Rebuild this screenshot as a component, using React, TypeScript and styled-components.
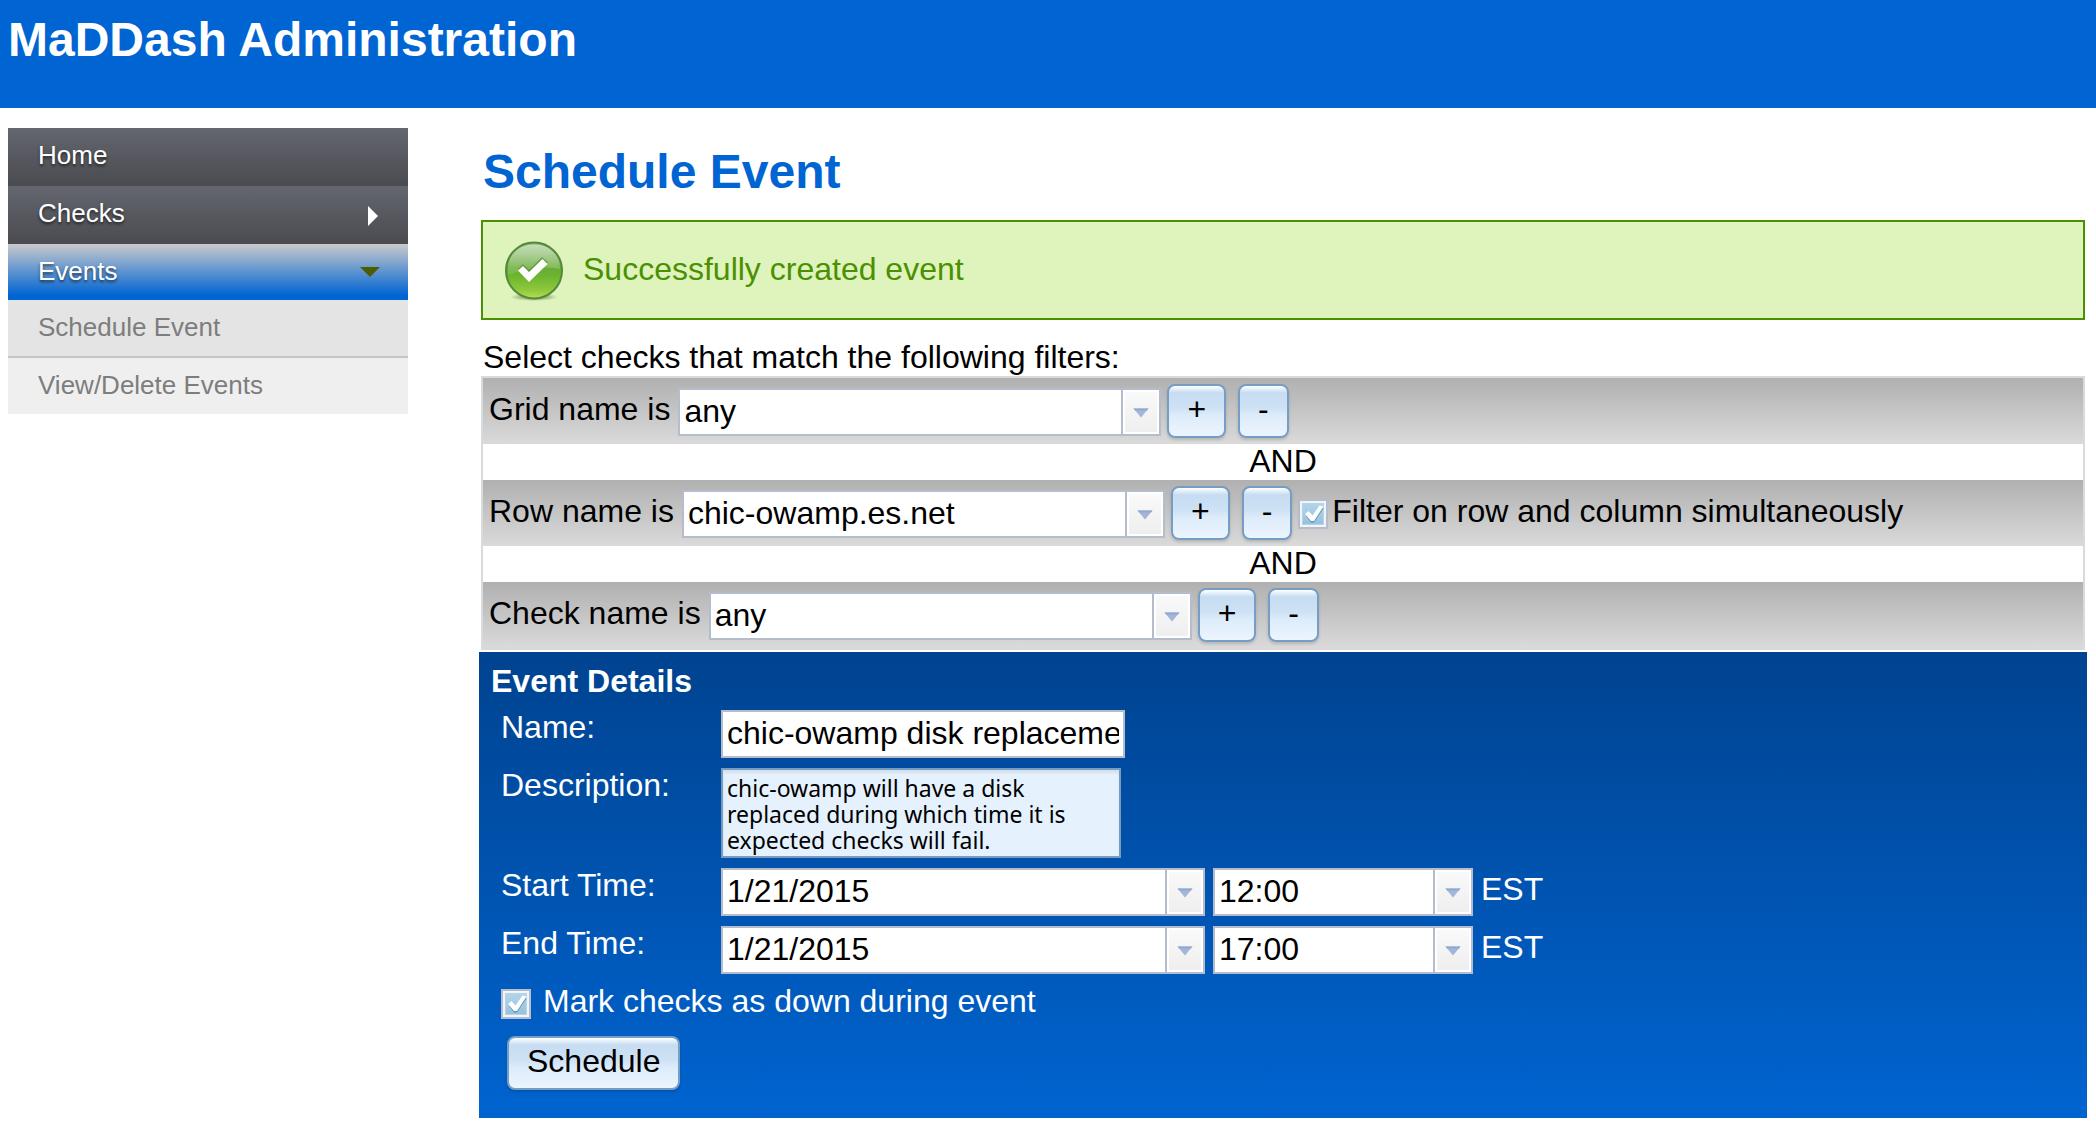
import React, { useState } from "react";
import styled, { createGlobalStyle, css } from "styled-components";

const BLUE = "#0064d2";
const FIELD_BORDER = "#b5bccb";
const FONT = '"Helvetica Neue", Helvetica, "Liberation Sans", Arial, sans-serif';

const GlobalStyle = createGlobalStyle`
  *, *::before, *::after { box-sizing: border-box; }
  body {
    margin: 0;
    background: #fff;
    color: #000;
    font-family: ${FONT};
    font-size: 32px;
    line-height: 34px;
  }
  button, input, select, textarea { font-family: inherit; font-size: inherit; color: inherit; }
`;

const Header = styled.header`
  padding: 12px 8px 40px;
  background: ${BLUE};
  color: #fff;
`;

const SiteTitle = styled.h1`
  margin: 0;
  font-size: 48px;
  line-height: 56px;
`;

const Body = styled.div`
  display: flex;
  align-items: flex-start;
  gap: 71px;
  padding: 0 9px 7px 8px;
`;

const Sidebar = styled.nav`
  flex: 0 0 400px;
  margin-top: 20px;
  font-size: 26px;
  line-height: 54px;
`;

const NavLink = styled.a<{ $active?: boolean }>`
  display: flex;
  align-items: center;
  justify-content: space-between;
  height: ${(p) => (p.$active ? 56 : 58)}px;
  padding: 0 28px 0 30px;
  color: #fff;
  text-decoration: none;
  text-shadow: 0 2px 3px rgba(0, 0, 0, 0.6);
  background: ${(p) =>
    p.$active
      ? `linear-gradient(#c9cacc, ${BLUE} 92%)`
      : "linear-gradient(#646670, #4a4b4f)"};
`;

const NavText = styled.span`
  align-self: flex-start;
`;

const SubLink = styled.a<{ $first?: boolean }>`
  display: block;
  padding: 0 30px 2px;
  color: #7d7d7d;
  text-decoration: none;
  background: ${(p) => (p.$first ? "#e4e4e4" : "#efefef")};
  ${(p) => p.$first && css`border-bottom: 2px solid #c5c5c5;`}
`;

const ArrowRight = styled.span`
  margin: 2px 2px 0 0;
  border: solid transparent;
  border-width: 10px 0 10px 10px;
  border-left-color: #fff;
`;

const ArrowDown = styled.span`
  border: solid transparent;
  border-width: 10px 10px 0;
  border-top-color: #4c5c00;
`;

const Main = styled.main`
  flex: 1;
  min-width: 0;
`;

const PageTitle = styled.h2`
  margin: 36px 4px 20px;
  color: ${BLUE};
  font-size: 48px;
  line-height: 56px;
`;

const Notice = styled.div`
  display: flex;
  align-items: center;
  gap: 19px;
  margin: 0 2px;
  padding: 19px 21px 17px;
  border: 2px solid #4b9000;
  background: #dff3bd;
  color: #4b9000;
`;

const Intro = styled.p`
  margin: 20px 4px 2px;
`;

const FilterList = styled.div`
  margin: 0 2px 2px;
  border: 2px solid #dadada;
`;

const FilterRow = styled.div`
  display: flex;
  align-items: center;
  padding: 6px;
  background: linear-gradient(#b0b0b0, #dadada);
`;

const FilterLabel = styled.label`
  margin-right: 8px;
  padding-bottom: 4px;
`;

const Conjunction = styled.div`
  padding-bottom: 2px;
  text-align: center;
`;

const Combo = styled.span<{ $width: number; $offset?: boolean }>`
  display: grid;
  flex: none;
  grid-template-columns: minmax(0, 1fr) 38px;
  width: ${(p) => p.$width}px;
  height: 48px;
  margin-top: ${(p) => (p.$offset ? 2 : 0)}px;
  border: 2px solid ${FIELD_BORDER};
  background: #fff;
  color: #000;
`;

const fieldReset = css`
  min-width: 0;
  height: 44px;
  margin: 0;
  padding: 0 4px 2px;
  border: 0;
  border-radius: 0;
  outline: 0;
  appearance: none;
  background: transparent;
`;

const ComboSelect = styled.select`
  ${fieldReset}
  grid-area: 1 / 1 / 2 / 3;
`;

const ComboInput = styled.input`
  ${fieldReset}
`;

const dropStyle = css`
  display: grid;
  place-items: center;
  margin: 0;
  padding: 2px 0 0;
  border: 0;
  border-left: 2px solid ${FIELD_BORDER};
  background: linear-gradient(#fafafa, #eeeeee);
  box-shadow: inset 0 0 0 2px #fff;
`;

const DropMark = styled.span`
  ${dropStyle}
  grid-area: 1 / 2 / 2 / 3;
  pointer-events: none;
`;

const DropButton = styled.button`
  ${dropStyle}
`;

const Button = styled.button`
  height: 54px;
  padding: 0 18px 4px;
  border: 2px solid #769dc4;
  border-radius: 8px;
  background: linear-gradient(#ffffff 0, #c6dcf2 14%, #cfe2f5 45%, #deecfa 60%, #ebf5fe 100%);
  color: #000;
  line-height: 34px;
  box-shadow: 0 2px 3px rgba(0, 0, 0, 0.15);
`;

const AddButton = styled(Button)`
  margin: 0 12px 0 6px;
`;

const RemoveButton = styled(Button)`
  margin-right: 6px;
`;

const CheckLabel = styled.label<{ $gap: number; $onPanel?: boolean }>`
  display: flex;
  align-items: ${(p) => (p.$onPanel ? "flex-start" : "center")};
  gap: ${(p) => p.$gap}px;
`;

const CheckText = styled.span<{ $raised?: boolean }>`
  padding-bottom: ${(p) => (p.$raised ? 4 : 0)}px;
`;

const CheckBoxFrame = styled.span<{ $drop: number }>`
  display: grid;
  margin-top: ${(p) => p.$drop}px;

  & > * { grid-area: 1 / 1; }
  svg { pointer-events: none; }
`;

const CheckInput = styled.input`
  width: 30px;
  height: 30px;
  margin: 0;
  appearance: none;
  border: 2px solid ${FIELD_BORDER};
  background: linear-gradient(#b4d8ec, #93c0dc);
  box-shadow: inset 0 0 0 2px #f2f4f8, inset 0 0 0 3px #b9d3e6;
`;

const Details = styled.form`
  padding: 12px 12px 28px;
  background: linear-gradient(#004390, #0064d0);
  color: #fff;
`;

const DetailsTitle = styled.h3`
  margin: 0 0 12px;
  font-size: 32px;
  line-height: 34px;
`;

const FieldGrid = styled.div`
  display: grid;
  grid-template-columns: 220px minmax(0, 1fr);
  gap: 10px 0;
  margin: 0 10px 10px;
`;

const FieldLine = styled.div`
  display: flex;
  gap: 8px;
`;

const Zone = styled.span`
  line-height: 42px;
`;

const NameInput = styled.input`
  width: 404px;
  height: 48px;
  padding: 0 4px 2px;
  border: 2px solid ${FIELD_BORDER};
  border-radius: 0;
  background: #fff;
  color: #000;
`;

const DescriptionInput = styled.textarea`
  display: block;
  width: 400px;
  height: 90px;
  padding: 5px 4px 3px;
  border: 2px solid #769dc0;
  border-radius: 0;
  resize: none;
  overflow: hidden;
  background: #e5f2fe;
  box-shadow: inset 0 3px 3px rgba(0, 0, 0, 0.08);
  color: #000;
  font-family: "Lucida Grande", "Noto Sans", sans-serif;
  font-size: 23px;
  line-height: 26px;
`;

const Actions = styled.div`
  margin: 0 10px;
`;

const SubmitButton = styled(Button)`
  display: block;
  margin: 17px 6px 0;
`;

function Triangle() {
  return (
    <svg width="16" height="10" viewBox="0 0 16 10" aria-hidden="true">
      <path d="M0.5 0.5h15L8 9.5z" fill="#a3b5d8" />
      <path d="M0.5 0.5h15L14 2.4H2z" fill="#8fa9d0" />
    </svg>
  );
}

function SuccessIcon() {
  return (
    <svg width="60" height="60" viewBox="0 0 60 60" aria-hidden="true">
      <defs>
        <linearGradient id="orb" x1="0" y1="0" x2="0" y2="1">
          <stop offset="0" stopColor="#8cbc78" />
          <stop offset="0.45" stopColor="#68ab37" />
          <stop offset="0.6" stopColor="#6db52f" />
          <stop offset="0.85" stopColor="#8fc93d" />
          <stop offset="1" stopColor="#b5de55" />
        </linearGradient>
        <linearGradient id="gloss" x1="0" y1="0" x2="0" y2="1">
          <stop offset="0" stopColor="#fff" stopOpacity="0.5" />
          <stop offset="1" stopColor="#fff" stopOpacity="0.08" />
        </linearGradient>
        <radialGradient id="ground">
          <stop offset="0" stopColor="#3c5a1c" stopOpacity="0.8" />
          <stop offset="1" stopColor="#3c5a1c" stopOpacity="0" />
        </radialGradient>
      </defs>
      <ellipse cx="30" cy="56" rx="24" ry="4" fill="url(#ground)" />
      <circle cx="30" cy="29.5" r="28" fill="url(#orb)" stroke="#55893a" strokeWidth="2" />
      <path d="M4 28C4 13 15 3.500 30 3.500S56 13 56 28C42 25 22 27 4 34z" fill="url(#gloss)" />
      <path d="M14 28l5-5 6 6 13-13 6 5.500L25 40z" fill="#4c8a2c" opacity="0.6" />
      <path d="M14 29.500l5-4.500 6 6 13.500-13 5 5L25 41z" fill="#fff" />
    </svg>
  );
}

function CheckBox(props: { id: string; drop: number }) {
  const [checked, setChecked] = useState(true);
  return (
    <CheckBoxFrame $drop={props.drop}>
      <CheckInput
        id={props.id}
        type="checkbox"
        checked={checked}
        onChange={(e) => setChecked(e.target.checked)}
      />
      {checked && (
        <svg width="30" height="30" viewBox="0 0 30 30" aria-hidden="true">
          <path d="M8 17l3-2 3.500 4.500L22 8l3.500 1.500L16 23.500h-3z" fill="#5f98bd" />
          <path d="M7 15l3.500-3 4 4.500L21.500 6.500l4 1L16 22h-3z" fill="#fff" />
        </svg>
      )}
    </CheckBoxFrame>
  );
}

function Filter(props: {
  id: string;
  label: string;
  value: string;
  children?: React.ReactNode;
}) {
  return (
    <FilterRow>
      <FilterLabel htmlFor={props.id}>{props.label}</FilterLabel>
      <Combo $width={483} $offset>
        <ComboSelect id={props.id} defaultValue={props.value}>
          <option>{props.value}</option>
        </ComboSelect>
        <DropMark>
          <Triangle />
        </DropMark>
      </Combo>
      <AddButton type="button">+</AddButton>
      <RemoveButton type="button">-</RemoveButton>
      {props.children}
    </FilterRow>
  );
}

function ComboField(props: { id?: string; name: string; value: string; width: number }) {
  return (
    <Combo $width={props.width}>
      <ComboInput id={props.id} aria-label={props.name} defaultValue={props.value} />
      <DropButton type="button" aria-label={`Choose ${props.name}`}>
        <Triangle />
      </DropButton>
    </Combo>
  );
}

function TimeFields(props: { id: string; label: string; date: string; time: string }) {
  return (
    <>
      <label htmlFor={props.id}>{props.label}:</label>
      <FieldLine>
        <ComboField id={props.id} name={`${props.label} date`} value={props.date} width={484} />
        <ComboField name={`${props.label} hour`} value={props.time} width={260} />
        <Zone>EST</Zone>
      </FieldLine>
    </>
  );
}

export default function App() {
  return (
    <>
      <GlobalStyle />
      <Header>
        <SiteTitle>MaDDash Administration</SiteTitle>
      </Header>
      <Body>
        <Sidebar>
          <NavLink href="#home">
            <NavText>Home</NavText>
          </NavLink>
          <NavLink href="#checks">
            <NavText>Checks</NavText>
            <ArrowRight />
          </NavLink>
          <NavLink href="#events" $active>
            <NavText>Events</NavText>
            <ArrowDown />
          </NavLink>
          <SubLink href="#schedule" $first>
            Schedule Event
          </SubLink>
          <SubLink href="#view">View/Delete Events</SubLink>
        </Sidebar>
        <Main>
          <PageTitle>Schedule Event</PageTitle>
          <Notice role="status">
            <SuccessIcon />
            <CheckText $raised>Successfully created event</CheckText>
          </Notice>
          <Intro>Select checks that match the following filters:</Intro>
          <FilterList>
            <Filter id="grid" label="Grid name is" value="any" />
            <Conjunction>AND</Conjunction>
            <Filter id="row" label="Row name is" value="chic-owamp.es.net">
              <CheckLabel $gap={4} htmlFor="both">
                <CheckBox id="both" drop={2} />
                <CheckText $raised>Filter on row and column simultaneously</CheckText>
              </CheckLabel>
            </Filter>
            <Conjunction>AND</Conjunction>
            <Filter id="check" label="Check name is" value="any" />
          </FilterList>
          <Details onSubmit={(e) => e.preventDefault()}>
            <DetailsTitle>Event Details</DetailsTitle>
            <FieldGrid>
              <label htmlFor="name">Name:</label>
              <NameInput id="name" defaultValue="chic-owamp disk replacement" />
              <label htmlFor="description">Description:</label>
              <DescriptionInput
                id="description"
                defaultValue="chic-owamp will have a disk replaced during which time it is expected checks will fail."
              />
              <TimeFields id="start" label="Start Time" date="1/21/2015" time="12:00" />
              <TimeFields id="end" label="End Time" date="1/21/2015" time="17:00" />
            </FieldGrid>
            <Actions>
              <CheckLabel $gap={12} $onPanel htmlFor="down">
                <CheckBox id="down" drop={5} />
                <CheckText>Mark checks as down during event</CheckText>
              </CheckLabel>
              <SubmitButton type="submit">Schedule</SubmitButton>
            </Actions>
          </Details>
        </Main>
      </Body>
    </>
  );
}
